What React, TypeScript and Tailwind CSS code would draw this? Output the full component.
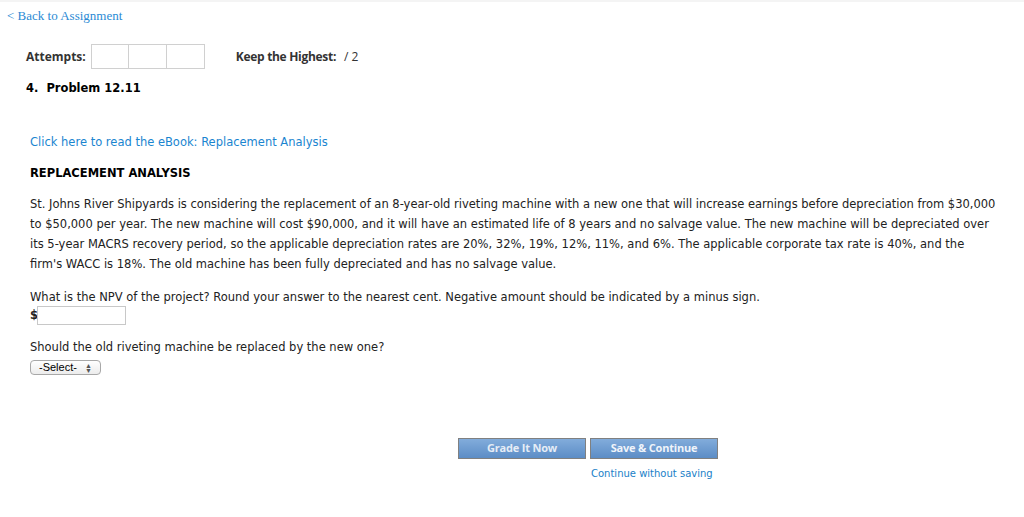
import { useState } from 'react';

const body = "font-['DejaVu_Sans',sans-serif]";
const heading = "font-['Open_Sans','Lato',sans-serif]";

export default function App() {
  const [npv, setNpv] = useState('');

  return (
    <div className={`min-h-[517px] w-[1024px] bg-white text-[#222] ${body}`}>
      {/* top strip */}
      <div className="h-[2px] bg-[#f4f4f4]" />

      <div className="mt-[6px] h-[16px] pl-[7px] text-[13px] leading-[16px]">
        <a href="#" className="font-['Liberation_Serif','DejaVu_Serif',serif] text-[#2a8ad4]">
          &lt; Back to Assignment
        </a>
      </div>

      <div className="mt-[20px] flex h-[25px] items-center pl-[26px] text-[12px] leading-[15px]">
        <span className={`${heading} font-bold text-[#333]`}>Attempts:</span>
        <div className="ml-[5px] flex">
          <div className="h-[25px] w-[38px] border border-[#d0d0d0]" />
          <div className="h-[25px] w-[38px] border border-l-0 border-[#d0d0d0]" />
          <div className="h-[25px] w-[38px] border border-l-0 border-[#d0d0d0]" />
        </div>
        <span className={`${heading} ml-[31px] font-bold tracking-[-0.3px] text-[#333]`}>Keep the Highest:</span>
        <span className={`${heading} ml-[8px] text-[#333]`}>/ 2</span>
      </div>

      <div className="mt-[12px] pl-[26px] text-[11.5px] font-bold leading-[15px] text-black">4.&nbsp; Problem 12.11</div>

      <div className="pl-[30px] pr-[20px] text-[11.5px]">
        <a href="#" className="mt-[39px] block leading-[15px] text-[#1a85d0]">
          Click here to read the eBook: Replacement Analysis
        </a>
        <div className="mt-[16px] font-bold leading-[15px] text-black">REPLACEMENT ANALYSIS</div>
        <p className="mt-[13px] leading-[20px] text-[#222]">
          St. Johns River Shipyards is considering the replacement of an 8-year-old riveting machine with a new one that will increase earnings before depreciation from $30,000 to $50,000 per year. The new machine will cost $90,000, and it will have an estimated life of 8 years and no salvage value. The new machine will be depreciated over its 5-year MACRS recovery period, so the applicable depreciation rates are 20%, 32%, 19%, 12%, 11%, and 6%. The applicable corporate tax rate is 40%, and the
          <br />
          firm's WACC is 18%. The old machine has been fully depreciated and has no salvage value.
        </p>
        <p className="mt-[16px] leading-[15px]">
          What is the NPV of the project? Round your answer to the nearest cent. Negative amount should be indicated by a minus sign.
        </p>
        <div className="mt-[1px] flex h-[19px] items-center">
          <span className="w-[7px] font-bold leading-[15px]">$</span>
          <input
            value={npv}
            onChange={e => setNpv(e.target.value)}
            className="h-[19px] w-[89px] border border-[#c8c8c8] px-1 text-[12px] outline-none"
          />
        </div>
        <p className="mt-[15px] leading-[15px]">Should the old riveting machine be replaced by the new one?</p>
        <div className="mt-[5px] h-[15px]">
          <div className="flex h-[15px] w-[71px] items-center justify-between rounded-[4px] border border-[#a8a8a8] bg-gradient-to-b from-white to-[#ececec] pl-[8px] pr-[8px] font-['Liberation_Sans',Arial,sans-serif] text-[11px] leading-none text-black">
            <span>-Select-</span>
            <span className="flex flex-col text-[7px] leading-[5px] text-[#555]">
              <span>▲</span>
              <span>▼</span>
            </span>
          </div>
        </div>
      </div>

      <div className="mt-[63px] flex gap-[4px] pl-[458px]">
        <button className={`${heading} h-[21px] w-[128px] border border-[#808080] bg-gradient-to-b from-[#82acdb] to-[#5c8dc6] text-[11px] font-bold tracking-[-0.2px] text-[#e6edf6]`}>
          Grade It Now
        </button>
        <button className={`${heading} h-[21px] w-[128px] border border-[#808080] bg-gradient-to-b from-[#82acdb] to-[#5c8dc6] text-[11px] font-bold tracking-[-0.2px] text-[#f0f4fa]`}>
          Save &amp; Continue
        </button>
      </div>
      <div className="mt-[8px] h-[14px] pl-[591px] text-[10px] leading-[14px]">
        <a href="#" className="text-[#1a7fc8]">Continue without saving</a>
      </div>
    </div>
  );
}
